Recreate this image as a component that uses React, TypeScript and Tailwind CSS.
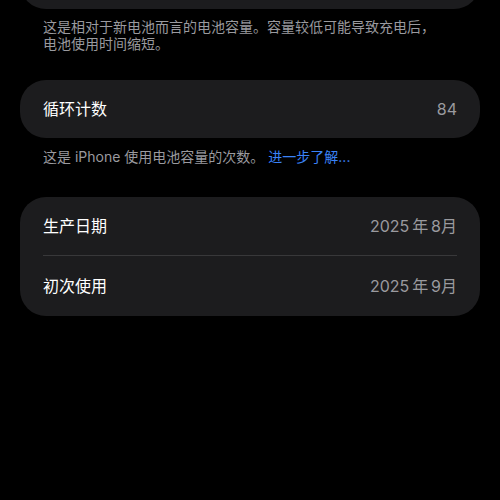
export default function App() {
  const font = { fontFamily: '"Inter", "Noto Sans CJK SC", sans-serif' }
  return (
    <div className="w-[500px] h-[500px] bg-black overflow-hidden" style={font}>
      <div className="px-[20px]">
        <div className="h-[60px] -mt-[51px] rounded-[26px] bg-[#1c1c1e]" />
        <p className="mt-[9px] px-[23px] text-[14px] leading-[17px] text-[#9a9a9f]">
          这是相对于新电池而言的电池容量。容量较低可能导致充电后，
          <br />
          电池使用时间缩短。
        </p>

        <div className="mt-[28px] h-[58px] rounded-[26px] bg-[#1c1c1e] flex items-center justify-between px-[23px]">
          <span className="text-[16px] text-white">循环计数</span>
          <span className="text-[16px] text-[#9a9a9f]">84</span>
        </div>
        <p className="mt-[10px] px-[23px] text-[14px] leading-[17px] text-[#9a9a9f]">
          这是 iPhone 使用电池容量的次数。<span className="ml-[4px] text-[#3a82f7]">进一步了解...</span>
        </p>

        <div className="mt-[32px] rounded-[26px] bg-[#1c1c1e] px-[23px]">
          <div className="h-[59px] flex items-center justify-between border-b border-[#38383a]">
            <span className="text-[16px] text-white">生产日期</span>
            <span className="text-[16px] text-[#9a9a9f]">2025{"\u2009"}年{"\u2009"}8月</span>
          </div>
          <div className="h-[60px] flex items-center justify-between">
            <span className="text-[16px] text-white">初次使用</span>
            <span className="text-[16px] text-[#9a9a9f]">2025{"\u2009"}年{"\u2009"}9月</span>
          </div>
        </div>
      </div>
    </div>
  )
}
